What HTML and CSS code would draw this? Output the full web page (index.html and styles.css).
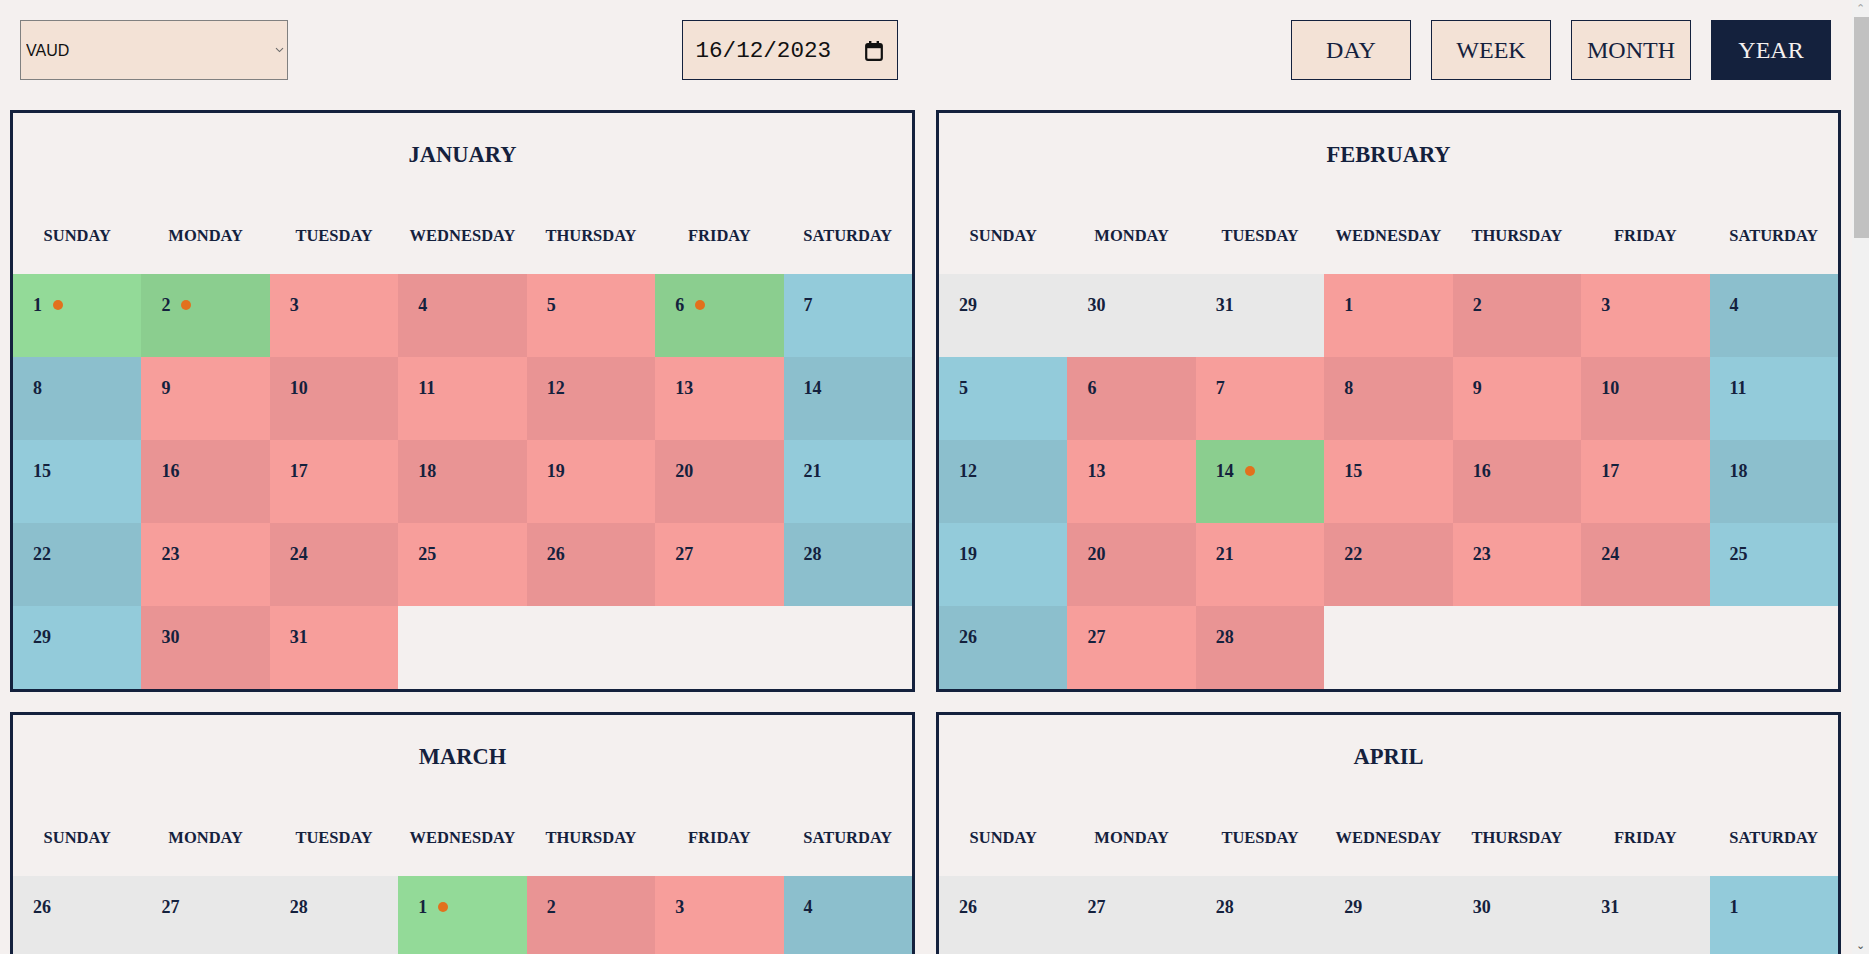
FILE: index.html
```html
<!DOCTYPE html>
<html lang="fr">
<head>
    <meta charset="UTF-8">
    <meta name="viewport" content="width=device-width, initial-scale=1.0">
    <title>Calendrier des jours fériés</title>
    <link rel="stylesheet" href="styles.css">
</head>
<body>
    <header class="toolbar">
        <div class="select-wrap">
            <select class="canton-select" id="cantonSelect">
                <option>VAUD</option>
                <option>GENÈVE</option>
                <option>FRIBOURG</option>
                <option>VALAIS</option>
                <option>NEUCHÂTEL</option>
            </select>
            <svg class="select-arrow" width="9" height="6" viewBox="0 0 9 6" aria-hidden="true">
                <path d="M1 1.2 L4.5 4.6 L8 1.2" fill="none" stroke="#6b6b6b" stroke-width="1.1"/>
            </svg>
        </div>

        <label class="date-field">
            <input type="text" id="dateInput" value="16/12/2023">
            <svg class="date-icon" width="18" height="21" viewBox="0 0 18 21" aria-hidden="true">
                <rect x="1.2" y="4" width="15.6" height="15.8" rx="1.8" fill="none" stroke="#111" stroke-width="2.2"/>
                <rect x="1.2" y="4" width="15.6" height="4.2" fill="#111"/>
                <rect x="4" y="1" width="2.4" height="4" fill="#111"/>
                <rect x="11.6" y="1" width="2.4" height="4" fill="#111"/>
            </svg>
        </label>

        <nav class="view-switch">
            <button class="view-btn">DAY</button>
            <button class="view-btn">WEEK</button>
            <button class="view-btn">MONTH</button>
            <button class="view-btn active">YEAR</button>
        </nav>
    </header>

    <main class="year-grid" id="yearGrid"></main>

    <div class="scrollbar" aria-hidden="true">
        <span class="scroll-arrow up">&#8963;</span>
        <span class="scroll-thumb"></span>
        <span class="scroll-arrow down">&#8964;</span>
    </div>

    <script>
        const year = 2023;
        const monthNames = ['JANUARY', 'FEBRUARY', 'MARCH', 'APRIL', 'MAY', 'JUNE',
            'JULY', 'AUGUST', 'SEPTEMBER', 'OCTOBER', 'NOVEMBER', 'DECEMBER'];
        const dayNames = ['SUNDAY', 'MONDAY', 'TUESDAY', 'WEDNESDAY', 'THURSDAY', 'FRIDAY', 'SATURDAY'];

        // month index -> holiday days
        const holidays = {
            0: [1, 2, 6],
            1: [14],
            2: [1],
            3: [7, 10],
            4: [18, 29],
            7: [1],
            8: [18],
            11: [25]
        };

        function buildMonth(month) {
            const box = document.createElement('section');
            box.className = 'month';

            const title = document.createElement('h2');
            title.className = 'month-title';
            title.textContent = monthNames[month];
            box.appendChild(title);

            const head = document.createElement('div');
            head.className = 'weekdays';
            dayNames.forEach(name => {
                const cell = document.createElement('div');
                cell.textContent = name;
                head.appendChild(cell);
            });
            box.appendChild(head);

            const days = document.createElement('div');
            days.className = 'days';

            const first = new Date(year, month, 1).getDay();
            const prevLast = new Date(year, month, 0).getDate();
            for (let i = first - 1; i >= 0; i--) {
                days.appendChild(makeCell(prevLast - i, 'other'));
            }

            const last = new Date(year, month + 1, 0).getDate();
            const list = holidays[month] || [];
            for (let d = 1; d <= last; d++) {
                const weekday = new Date(year, month, d).getDay();
                let type = 'work';
                if (list.includes(d)) type = 'holiday';
                else if (weekday === 0 || weekday === 6) type = 'weekend';
                const cell = makeCell(d, type + (d % 2 === 0 ? ' even' : ''));
                if (type === 'holiday') {
                    const dot = document.createElement('span');
                    dot.className = 'dot';
                    cell.firstChild.appendChild(dot);
                }
                days.appendChild(cell);
            }

            box.appendChild(days);
            return box;
        }

        function makeCell(num, cls) {
            const cell = document.createElement('div');
            cell.className = 'day ' + cls;
            const label = document.createElement('span');
            label.className = 'day-num';
            label.textContent = num;
            cell.appendChild(label);
            return cell;
        }

        const grid = document.getElementById('yearGrid');
        for (let m = 0; m < 12; m++) {
            grid.appendChild(buildMonth(m));
        }
    </script>
</body>
</html>
```

FILE: styles.css
```css
body {
    margin: 0;
    padding-right: 17px;
    background-color: #f4f0ef;
    color: #14213d;
    font-family: "Liberation Serif", "Times New Roman", serif;
}
.toolbar {
    display: flex;
    justify-content: space-between;
    align-items: center;
    padding: 20px 21px 0 20px;
}
.select-wrap {
    position: relative;
}
.canton-select {
    display: block;
    width: 268px;
    height: 60px;
    padding: 0 5px;
    font-family: "Liberation Sans", Arial, sans-serif;
    font-size: 16px;
    color: #111;
    background-color: #f3e2d6;
    border: 1px solid #808080;
    border-radius: 0;
    appearance: none;
    -webkit-appearance: none;
    outline: none;
}
.select-arrow {
    position: absolute;
    top: 27px;
    right: 4px;
    pointer-events: none;
}
.date-field {
    display: flex;
    align-items: center;
    justify-content: space-between;
    box-sizing: border-box;
    width: 216px;
    height: 60px;
    padding: 0 14px 0 13px;
    background-color: #f3e2d6;
    border: 1px solid #14213d;
}
.date-field input {
    width: 140px;
    padding: 2px 0 0;
    border: none;
    outline: none;
    background: none;
    font-family: "Liberation Mono", "Courier New", monospace;
    font-size: 22.6px;
    color: #111;
}
.date-icon {
    display: block;
}
.view-switch {
    display: flex;
    gap: 20px;
}
.view-btn {
    width: 120px;
    height: 60px;
    padding: 0;
    font-family: "Liberation Serif", "Times New Roman", serif;
    font-size: 24px;
    color: #14213d;
    background-color: #f3e2d6;
    border: 1px solid #14213d;
    cursor: pointer;
}
.view-btn.active {
    background-color: #14213d;
    color: #f4f0ef;
}
.year-grid {
    display: grid;
    grid-template-columns: 1fr 1fr;
    gap: 20px 21px;
    padding: 30px 11px 20px 10px;
}
.month {
    border: 3px solid #14213d;
    align-self: start;
}
.month-title {
    margin: 0;
    padding: 30px 0;
    font-size: 22.5px;
    line-height: 24px;
    text-align: center;
}
.weekdays {
    display: grid;
    grid-template-columns: repeat(7, 1fr);
    padding: 30px 0;
    font-size: 16.5px;
    font-weight: bold;
    line-height: 17px;
    text-align: center;
}
.days {
    display: grid;
    grid-template-columns: repeat(7, 1fr);
    grid-auto-rows: 83px;
}
.day {
    box-sizing: border-box;
    padding: 20px 0 0 20px;
    font-size: 18px;
    font-weight: bold;
    background-color: #f79e9b;
}
.day-num {
    display: inline-flex;
    align-items: center;
    line-height: 22px;
}
.day.even {
    background-color: #e99494;
}
.day.weekend {
    background-color: #93cbda;
}
.day.weekend.even {
    background-color: #8cbfcd;
}
.day.holiday {
    background-color: #93da98;
}
.day.holiday.even {
    background-color: #8bce8f;
}
.day.other {
    background-color: #e8e8e8;
}
.dot {
    width: 10px;
    height: 10px;
    margin-left: 11px;
    border-radius: 50%;
    background-color: #e2711d;
}
.scrollbar {
    position: fixed;
    top: 0;
    right: 0;
    display: flex;
    flex-direction: column;
    width: 17px;
    height: 100vh;
    background-color: #f1f1f1;
}
.scroll-arrow {
    height: 17px;
    font-family: "DejaVu Sans", sans-serif;
    font-size: 11px;
    line-height: 17px;
    text-align: center;
    color: #a3a3a3;
}
.scroll-arrow.down {
    margin-top: auto;
    color: #505050;
}
.scroll-thumb {
    height: 221px;
    margin-left: 2px;
    background-color: #c1c1c1;
}
```
